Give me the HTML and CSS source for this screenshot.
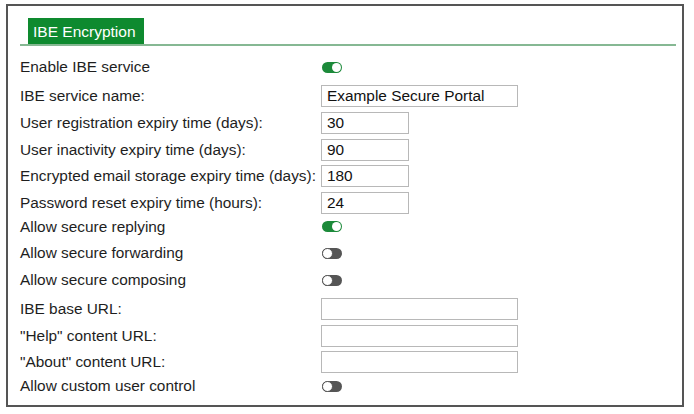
FILE: index.html
```html
<!DOCTYPE html>
<html>
<head>
<meta charset="utf-8">
<link rel="stylesheet" href="styles.css">
</head>
<body>
<div class="frame">
  <div class="tabbar"><div class="tab">IBE Encryption</div></div>
  <div class="form">
    <div class="label">Enable IBE service</div><div class="ctl"><span class="toggle on"></span></div>
    <div class="label shift">IBE service name:</div><div class="ctl shift"><div class="input wide">Example Secure Portal</div></div>
    <div class="label shift">User registration expiry time (days):</div><div class="ctl shift"><div class="input narrow">30</div></div>
    <div class="label shift">User inactivity expiry time (days):</div><div class="ctl shift"><div class="input narrow">90</div></div>
    <div class="label shift">Encrypted email storage expiry time (days):</div><div class="ctl shift"><div class="input narrow">180</div></div>
    <div class="label shift">Password reset expiry time (hours):</div><div class="ctl shift"><div class="input narrow">24</div></div>
    <div class="label">Allow secure replying</div><div class="ctl"><span class="toggle on"></span></div>
    <div class="label">Allow secure forwarding</div><div class="ctl"><span class="toggle off"></span></div>
    <div class="label">Allow secure composing</div><div class="ctl"><span class="toggle off"></span></div>
    <div class="label shift">IBE base URL:</div><div class="ctl shift"><div class="input wide"></div></div>
    <div class="label shift">"Help" content URL:</div><div class="ctl shift"><div class="input wide"></div></div>
    <div class="label shift">"About" content URL:</div><div class="ctl shift"><div class="input wide"></div></div>
    <div class="label">Allow custom user control</div><div class="ctl"><span class="toggle off"></span></div>
  </div>
</div>
</body>
</html>
```
FILE: styles.css
```css
html, body { margin: 0; padding: 0; background: #fff; }
body { font-family: "Liberation Sans", Arial, sans-serif; color: #1e1e1e; font-size: 15.4px; }
.frame {
  box-sizing: border-box;
  margin: 4px 0 0 6px;
  width: 678px;
  height: 403px;
  border: 2px solid #555;
  padding: 12px 6px 0 12px;
}
.tabbar {
  border-bottom: 2px solid #86b893;
  padding-left: 8px;
  display: flex;
}
.tab {
  background: #0e8a2f;
  color: #fff;
  font-size: 15.5px;
  height: 26px;
  line-height: 28px;
  width: 111px;
  padding-left: 5px;
}
.form {
  margin-top: 8px;
  display: grid;
  grid-template-columns: 301px auto;
  grid-auto-rows: 26.6px;
  align-items: center;
}
.label { white-space: nowrap; line-height: 18px; }
.ctl { display: flex; align-items: center; }
.shift { margin-top: 5px; }
.input {
  box-sizing: border-box;
  height: 22px;
  border: 1px solid #b8b8b8;
  padding-left: 5px;
  line-height: 20px;
  color: #111;
}
.wide { width: 197px; }
.narrow { width: 88px; }
.toggle {
  position: relative;
  display: inline-block;
  box-sizing: border-box;
  width: 20px;
  height: 11px;
  border-radius: 6px;
  margin-left: 1px;
}
.toggle.on { background: #1c8a3a; }
.toggle.off { background: #555; }
.toggle::after {
  content: "";
  position: absolute;
  top: 1px;
  width: 9px;
  height: 9px;
  box-sizing: border-box;
  border-radius: 50%;
  background: #fff;
}
.toggle.on::after { right: 1px; }
.toggle.off::after { left: 0; top: 0; width: 11px; height: 11px; border: 1px solid #555; }
```
